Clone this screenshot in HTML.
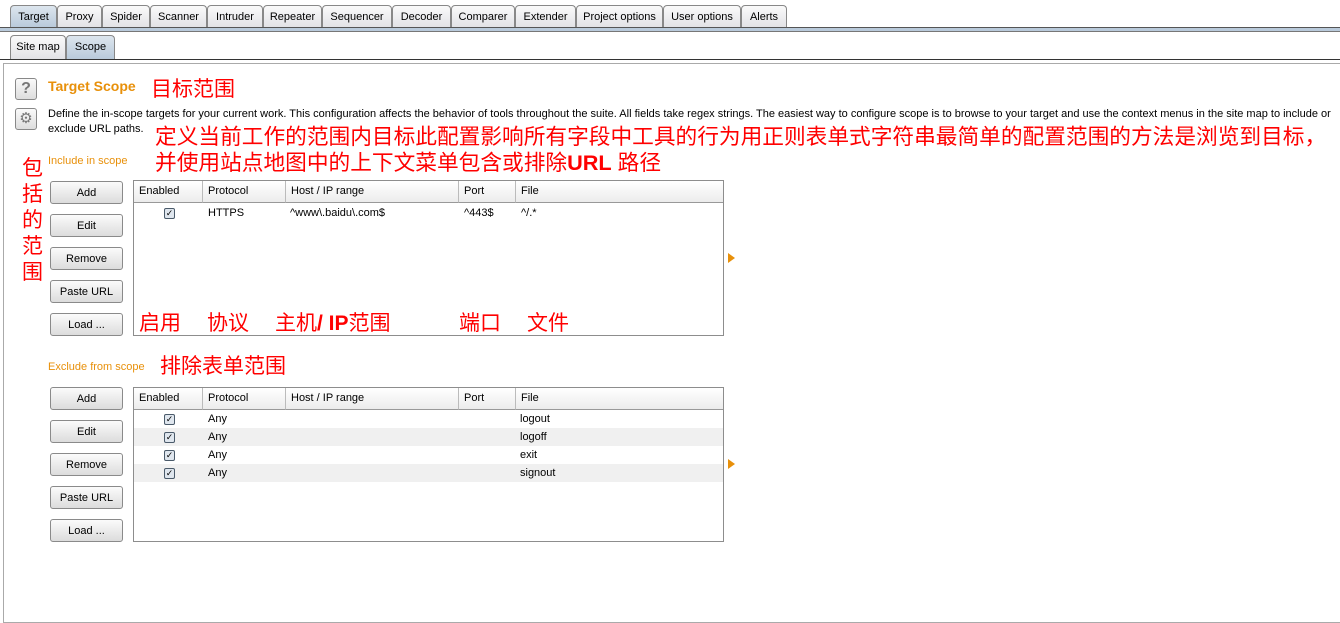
<!DOCTYPE html><html><head><meta charset="utf-8"><style>
body{margin:0;width:1340px;height:607px;background:#fff;font-family:"Liberation Sans",Arial,sans-serif;font-size:11px;color:#000;position:relative;overflow:hidden}
.a{position:absolute}
.tab{position:absolute;top:5px;height:22px;border:1px solid #888;border-bottom:none;border-radius:4px 4px 0 0;background:linear-gradient(#fafafa,#e2e2e6);text-align:center;line-height:22px;box-sizing:border-box}
.tab.s{background:linear-gradient(#dde6ee,#b9cadb)}
.btn{position:absolute;left:50px;width:73px;height:23px;border:1px solid #8a8a8a;border-radius:3px;background:linear-gradient(#fbfbfb,#dcdcdc);text-align:center;line-height:22px;box-sizing:border-box}
.tbl{position:absolute;left:133px;width:591px;border:1px solid #8d8d8d;background:#fff;box-sizing:border-box}
.hd{position:absolute;top:0;height:22px;line-height:21px;border-right:1px solid #bbb;border-bottom:1px solid #999;background:linear-gradient(#fff,#ececec);padding-left:5px;box-sizing:border-box}
.row{position:absolute;left:0;width:589px;height:18px;line-height:18px}
.row span{position:absolute}
.cb{position:absolute;left:30px;top:4px;width:9px;height:9px;border:1px solid #4a5a6a;border-radius:2px;background:#dfe6ee;font-size:9px;line-height:9px;text-align:center}
.r{position:absolute;color:#f00;font-family:"Liberation Sans","Noto Sans CJK SC",sans-serif;font-size:21px}
.or{color:#e8900a}
.arrow{position:absolute;left:728px;width:0;height:0;border-top:5px solid transparent;border-bottom:5px solid transparent;border-left:7px solid #e8900a}
</style></head><body>
<div class="tab s" style="left:10px;width:47px">Target</div>
<div class="tab" style="left:57px;width:45px">Proxy</div>
<div class="tab" style="left:102px;width:48px">Spider</div>
<div class="tab" style="left:150px;width:57px">Scanner</div>
<div class="tab" style="left:207px;width:56px">Intruder</div>
<div class="tab" style="left:263px;width:59px">Repeater</div>
<div class="tab" style="left:322px;width:70px">Sequencer</div>
<div class="tab" style="left:392px;width:59px">Decoder</div>
<div class="tab" style="left:451px;width:64px">Comparer</div>
<div class="tab" style="left:515px;width:61px">Extender</div>
<div class="tab" style="left:576px;width:87px">Project options</div>
<div class="tab" style="left:663px;width:78px">User options</div>
<div class="tab" style="left:741px;width:46px">Alerts</div>
<div class="a" style="left:0;top:27px;width:1340px;height:3px;background:#b9cadb;border-top:1px solid #555;border-bottom:1px solid #777"></div>
<div class="tab" style="left:10px;top:35px;width:56px;height:24px">Site map</div>
<div class="tab s" style="left:66px;top:35px;width:49px;height:24px">Scope</div>
<div class="a" style="left:0;top:59px;width:1340px;height:1px;background:#333"></div>
<div class="a" style="left:3px;top:63px;width:1340px;height:560px;border:1px solid #aaa;box-sizing:border-box"></div>
<div class="a" style="left:15px;top:78px;width:20px;height:20px;border:1px solid #888;border-radius:3px;background:linear-gradient(#fafafa,#ddd);text-align:center;font:bold 16px 'Liberation Sans';color:#777;line-height:20px">?</div>
<div class="a" style="left:15px;top:108px;width:20px;height:20px;border:1px solid #888;border-radius:3px;background:linear-gradient(#fafafa,#ddd);text-align:center;font-size:15px;color:#777;line-height:20px">⚙</div>
<div class="a or" style="left:48px;top:78px;font-size:14px;font-weight:bold">Target Scope</div>
<div class="r" style="left:151px;top:73px">目标范围</div>
<div class="a" style="left:48px;top:107px;width:1292px;line-height:15px">Define the in-scope targets for your current work. This configuration affects the behavior of tools throughout the suite. All fields take regex strings. The easiest way to configure scope is to browse to your target and use the context menus in the site map to include or exclude URL paths.</div>
<div class="r" style="left:155px;top:124px;line-height:26px;font-size:21.7px">定义当前工作的范围内目标此配置影响所有字段中工具的行为用正则表单式字符串最简单的配置范围的方法是浏览到目标，<br>并使用站点地图中的上下文菜单包含或排除<b>URL</b> 路径</div>
<div class="r" style="left:22px;top:156px;line-height:26px">包<br>括<br>的<br>范<br>围</div>
<div class="a or" style="left:48px;top:155px">Include in scope</div>
<div class="btn" style="top:181px">Add</div><div class="btn" style="top:214px">Edit</div><div class="btn" style="top:247px">Remove</div><div class="btn" style="top:280px">Paste URL</div><div class="btn" style="top:313px">Load ...</div>
<div class="tbl" style="top:180px;height:156px">
<div class="hd" style="left:0;width:69px">Enabled</div><div class="hd" style="left:69px;width:83px">Protocol</div><div class="hd" style="left:152px;width:173px">Host / IP range</div><div class="hd" style="left:325px;width:57px">Port</div><div class="hd" style="left:382px;width:207px;border-right:none">File</div>
<div class="row" style="top:23px"><div class="cb">✓</div><span style="left:74px">HTTPS</span><span style="left:156px">^www\.baidu\.com$</span><span style="left:330px">^443$</span><span style="left:387px">^/.*</span></div>
</div>
<div class="r" style="left:139px;top:307px">启用</div><div class="r" style="left:207px;top:307px">协议</div><div class="r" style="left:275px;top:307px">主机<b>/ IP</b>范围</div><div class="r" style="left:459px;top:307px">端口</div><div class="r" style="left:527px;top:307px">文件</div>
<div class="arrow" style="top:253px"></div>
<div class="a or" style="left:48px;top:361px">Exclude from scope</div>
<div class="r" style="left:160px;top:350px">排除表单范围</div>
<div class="btn" style="top:387px">Add</div><div class="btn" style="top:420px">Edit</div><div class="btn" style="top:453px">Remove</div><div class="btn" style="top:486px">Paste URL</div><div class="btn" style="top:519px">Load ...</div>
<div class="tbl" style="top:387px;height:155px">
<div class="hd" style="left:0;width:69px">Enabled</div><div class="hd" style="left:69px;width:83px">Protocol</div><div class="hd" style="left:152px;width:173px">Host / IP range</div><div class="hd" style="left:325px;width:57px">Port</div><div class="hd" style="left:382px;width:207px;border-right:none">File</div>
<div class="row" style="top:22px"><div class="cb">✓</div><span style="left:74px">Any</span><span style="left:386px">logout</span></div>
<div class="row" style="top:40px;background:#f0f0f0"><div class="cb">✓</div><span style="left:74px">Any</span><span style="left:386px">logoff</span></div>
<div class="row" style="top:58px"><div class="cb">✓</div><span style="left:74px">Any</span><span style="left:386px">exit</span></div>
<div class="row" style="top:76px;background:#f0f0f0"><div class="cb">✓</div><span style="left:74px">Any</span><span style="left:386px">signout</span></div>
</div>
<div class="arrow" style="top:459px"></div>
</body></html>
